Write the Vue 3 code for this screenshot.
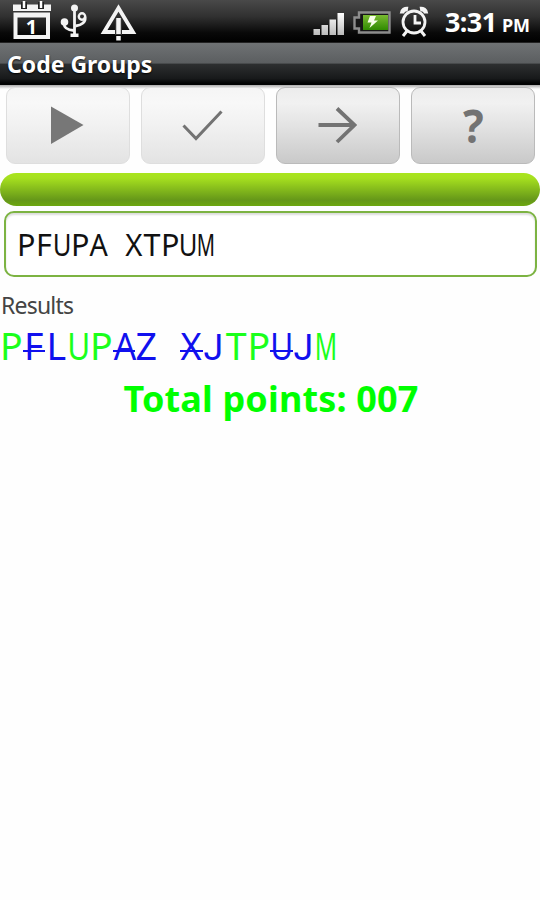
<script setup>
import { ref } from "vue";

const answer = ref("PFUPA XTPUM");

// state: ok = right letter, bad = typed wrong, fix = expected letter
const results = ref([
    { char: "P", state: "ok" },
    { char: "F", state: "bad" },
    { char: "L", state: "fix" },
    { char: "U", state: "ok" },
    { char: "P", state: "ok" },
    { char: "A", state: "bad" },
    { char: "Z", state: "fix" },
    { char: " ", state: "ok" },
    { char: "X", state: "bad" },
    { char: "J", state: "fix" },
    { char: "T", state: "ok" },
    { char: "P", state: "ok" },
    { char: "U", state: "bad" },
    { char: "J", state: "fix" },
    { char: "M", state: "ok" },
]);

const points = ref("007");

const glyphClass = (char) => (char === " " ? "" : `glyph-${char.toLowerCase()}`);
</script>

<template>
    <div class="screen">
        <!-- STATUS BAR -->
        <header class="status">
            <svg class="notifications" width="150" height="42" viewBox="0 0 150 42">
                <!-- calendar -->
                <path d="M13 4.500h38v6.500H13z" fill="#f4f4f4" />
                <path d="M13.500 12.500h36.500V39H13.500zM17.500 17.500v17.500h28.500v-17.500z" fill="#f4f4f4" fill-rule="evenodd" />
                <path d="M24 2v7M41 2v7" stroke="#222" stroke-width="6" />
                <path d="M24 1v7M41 1v7" stroke="#fff" stroke-width="2.500" />
                <text x="31.500" y="33.500" text-anchor="middle" class="day">1</text>
                <!-- usb -->
                <g fill="none" stroke="#f4f4f4" stroke-width="2.800">
                    <path d="M74.500 8v27" />
                    <path d="M64 23c0 5 3 7 10 7.500M85 17c1 5-3 8-9.500 9" />
                    <circle cx="82" cy="16.500" r="3.200" stroke-width="2.400" />
                </g>
                <circle cx="74.500" cy="8" r="3.500" fill="#f4f4f4" />
                <circle cx="64.500" cy="22" r="3.800" fill="#f4f4f4" />
                <path d="M70.500 33.500h8v3.500h-8z" fill="#f4f4f4" />
                <!-- warning -->
                <path d="M118.500 8L104 32h29z" fill="none" stroke="#f4f4f4" stroke-width="3.800" />
                <path d="M118.500 18v17" stroke="#333" stroke-width="7" />
                <path d="M118.500 18v16M118.500 36v4.500" stroke="#f4f4f4" stroke-width="4.500" />
            </svg>
            <div class="system">
                <svg width="120" height="42" viewBox="310 0 120 42">
                    <defs>
                        <linearGradient id="signal" x1="0" y1="0" x2="0" y2="1">
                            <stop offset="0" stop-color="#fff" />
                            <stop offset="1" stop-color="#bbb" />
                        </linearGradient>
                        <linearGradient id="charge" x1="0" y1="0" x2="0" y2="1">
                            <stop offset="0" stop-color="#7aba32" />
                            <stop offset="1" stop-color="#2f8a00" />
                        </linearGradient>
                    </defs>
                    <!-- signal -->
                    <path d="M313.500 29h6.500v6h-6.500zM321.500 25h6.500v10h-6.500zM329.500 19.500h6.500V35h-6.500zM337.500 13h6.500v22h-6.500z" fill="url(#signal)" />
                    <!-- battery -->
                    <path d="M359 12.500h30.500v20H359v-4h-4.500v-11h4.500z" fill="#171717" stroke="#8d8d8d" stroke-width="2.400" />
                    <path d="M363 15h25v15h-25z" fill="url(#charge)" />
                    <path d="M370 16h6l-2 4.500h4l-8.500 7.500 2-5.500h-4z" fill="#f8ffe9" />
                    <!-- alarm -->
                    <g fill="none" stroke="#f4f4f4" stroke-width="2.800">
                        <circle cx="414" cy="22" r="11" />
                        <path d="M415 15v8h6" />
                        <path d="M407 31l-4 5M421 31l4 5" stroke-width="3" />
                        <path d="M402 13.500c0-3 3-5 6-4.500M420 9c3-.5 6 1.500 6 4.500" stroke-width="4.500" />
                    </g>
                </svg>
                <span class="clock">3:31</span>
                <span class="meridiem">PM</span>
            </div>
        </header>

        <h1 class="title">Code Groups</h1>

        <!-- BUTTONS -->
        <div class="toolbar">
            <button class="btn" disabled aria-label="Play">
                <svg width="124" height="76" viewBox="0 0 124 76">
                    <path d="M45 19.500v37.500L77.500 38z" fill="#777" />
                </svg>
            </button>
            <button class="btn" disabled aria-label="Check">
                <svg width="124" height="76" viewBox="0 0 124 76">
                    <path d="M42.500 38.500L55 51.500 80.500 24.500" fill="none" stroke="#737373" stroke-width="3" />
                </svg>
            </button>
            <button class="btn" aria-label="Next">
                <svg width="124" height="76" viewBox="0 0 124 76">
                    <path d="M42.500 38h35M61 21.500L78.500 38 61 55" fill="none" stroke="#737373" stroke-width="3.800" />
                </svg>
            </button>
            <button class="btn" aria-label="Help"><span class="help">?</span></button>
        </div>

        <div class="progress"></div>

        <div class="field">
            <span v-for="(char, i) in answer" :key="i" class="cell"><span class="glyph" :class="glyphClass(char)">{{ char }}</span></span>
        </div>

        <!-- RESULTS -->
        <p class="label">Results</p>
        <div class="results">
            <span v-for="(item, i) in results" :key="i" class="cell" :class="item.state"><span class="glyph" :class="glyphClass(item.char)">{{ item.char }}</span></span>
        </div>
        <p class="total">Total points: {{ points }}</p>
    </div>
</template>

<style>
body {
    margin: 0;
    background: #fff;
}
</style>

<style scoped>
.screen {
    width: 540px;
    height: 900px;
    overflow: hidden;
    background: #fefefe;
    font-family: "Noto Sans", "Open Sans", sans-serif;
}

.status {
    display: flex;
    justify-content: space-between;
    height: 42px;
    background: linear-gradient(#494949, #303030 40%, #090909 78%, #000);
    color: #fff;
}

.day {
    font: bold 20px "Noto Sans", sans-serif;
    fill: #fff;
}

.system {
    display: flex;
    align-items: baseline;
    width: 230px;
    white-space: nowrap;
}

.system svg {
    flex: none;
    align-self: flex-start;
}

.clock {
    width: 57px;
    margin-left: 15px;
    font-size: 27px;
    font-weight: bold;
    line-height: 44px;
    letter-spacing: -0.6px;
}

.meridiem {
    font-size: 18px;
    font-weight: bold;
    letter-spacing: -0.3px;
}

.title {
    box-sizing: border-box;
    height: 43px;
    margin: 0;
    padding-left: 7px;
    border-top: 1px solid #222;
    background: linear-gradient(#6f7274, #5b5e60 48%, #2d2f30 50%, #17191a 85%, #020303 96%);
    color: #fff;
    font-size: 23px;
    font-weight: bold;
    line-height: 42px;
    text-shadow: 0 1px 2px #000;
}

.toolbar {
    display: flex;
    justify-content: space-between;
    height: 79px;
    padding: 2px 5px 0 6px;
    background: linear-gradient(#aaa, #fefefe 4px);
    box-sizing: border-box;
}

.btn {
    display: flex;
    align-items: center;
    justify-content: center;
    box-sizing: border-box;
    width: 124px;
    height: 77px;
    padding: 0;
    border: 1px solid #bababa;
    border-radius: 9px;
    background: linear-gradient(#ececec, #f1f1f1 20%, #e3e3e3 50%, #c9c9c9);
}

.btn:disabled {
    border-color: #dedede;
    background: linear-gradient(#f5f5f5, #f8f8f8 20%, #f1f1f1 50%, #e3e3e3);
}

.btn svg {
    flex: none;
    margin-top: -1px;
}

.help {
    color: #737373;
    font: bold 47px/75px "Noto Sans", sans-serif;
    transform: scaleX(0.92);
}

.progress {
    height: 33px;
    margin-top: 8.500px;
    border-radius: 17px;
    background: linear-gradient(#a9e51d, #a6e01f 15%, #659719 82%, #6ca70f);
}

.field {
    display: flex;
    box-sizing: border-box;
    height: 66px;
    margin: 5px 3px 0 4px;
    padding-left: 11px;
    border: 2.500px solid #7cb342;
    border-radius: 10px;
    background: #fff;
    box-shadow: inset 0 2px 2px #ddd;
    color: #111;
    font-size: 30.500px;
    line-height: 63px;
}

.cell {
    position: relative;
    flex: none;
    width: 18px;
    text-align: center;
    white-space: pre;
}

.glyph {
    display: inline-block;
}

/* wide letters are squeezed into the monospace cell */
.glyph-u {
    margin: 0 -4px;
    transform: scaleX(0.84);
}

.glyph-x {
    transform: scaleX(0.96);
}

.glyph-a {
    transform: scaleX(0.94);
}

.glyph-m {
    margin: 0 -10px;
    transform: scaleX(0.66);
}

.glyph-j {
    font-family: Roboto, sans-serif;
    transform: scaleX(0.95);
}

.label {
    margin: 11px 0 0 1px;
    color: #444;
    font-size: 23px;
    line-height: 35px;
    letter-spacing: -0.8px;
}

.results {
    display: flex;
    height: 46px;
    font-size: 37.500px;
    line-height: 46px;
}

.results .cell {
    width: 22.500px;
}

.ok {
    color: #1bff1b;
}

.bad,
.fix {
    color: #1010ee;
}

/* strike line across the whole cell */
.bad::after {
    content: "";
    position: absolute;
    top: 27px;
    left: 0;
    width: 100%;
    height: 2px;
    background: #1010ee;
}

.total {
    margin: 6px 0 0 2px;
    color: #0f0;
    font-size: 36px;
    font-weight: bold;
    line-height: 48px;
    letter-spacing: 0.15px;
    text-align: center;
}
</style>
